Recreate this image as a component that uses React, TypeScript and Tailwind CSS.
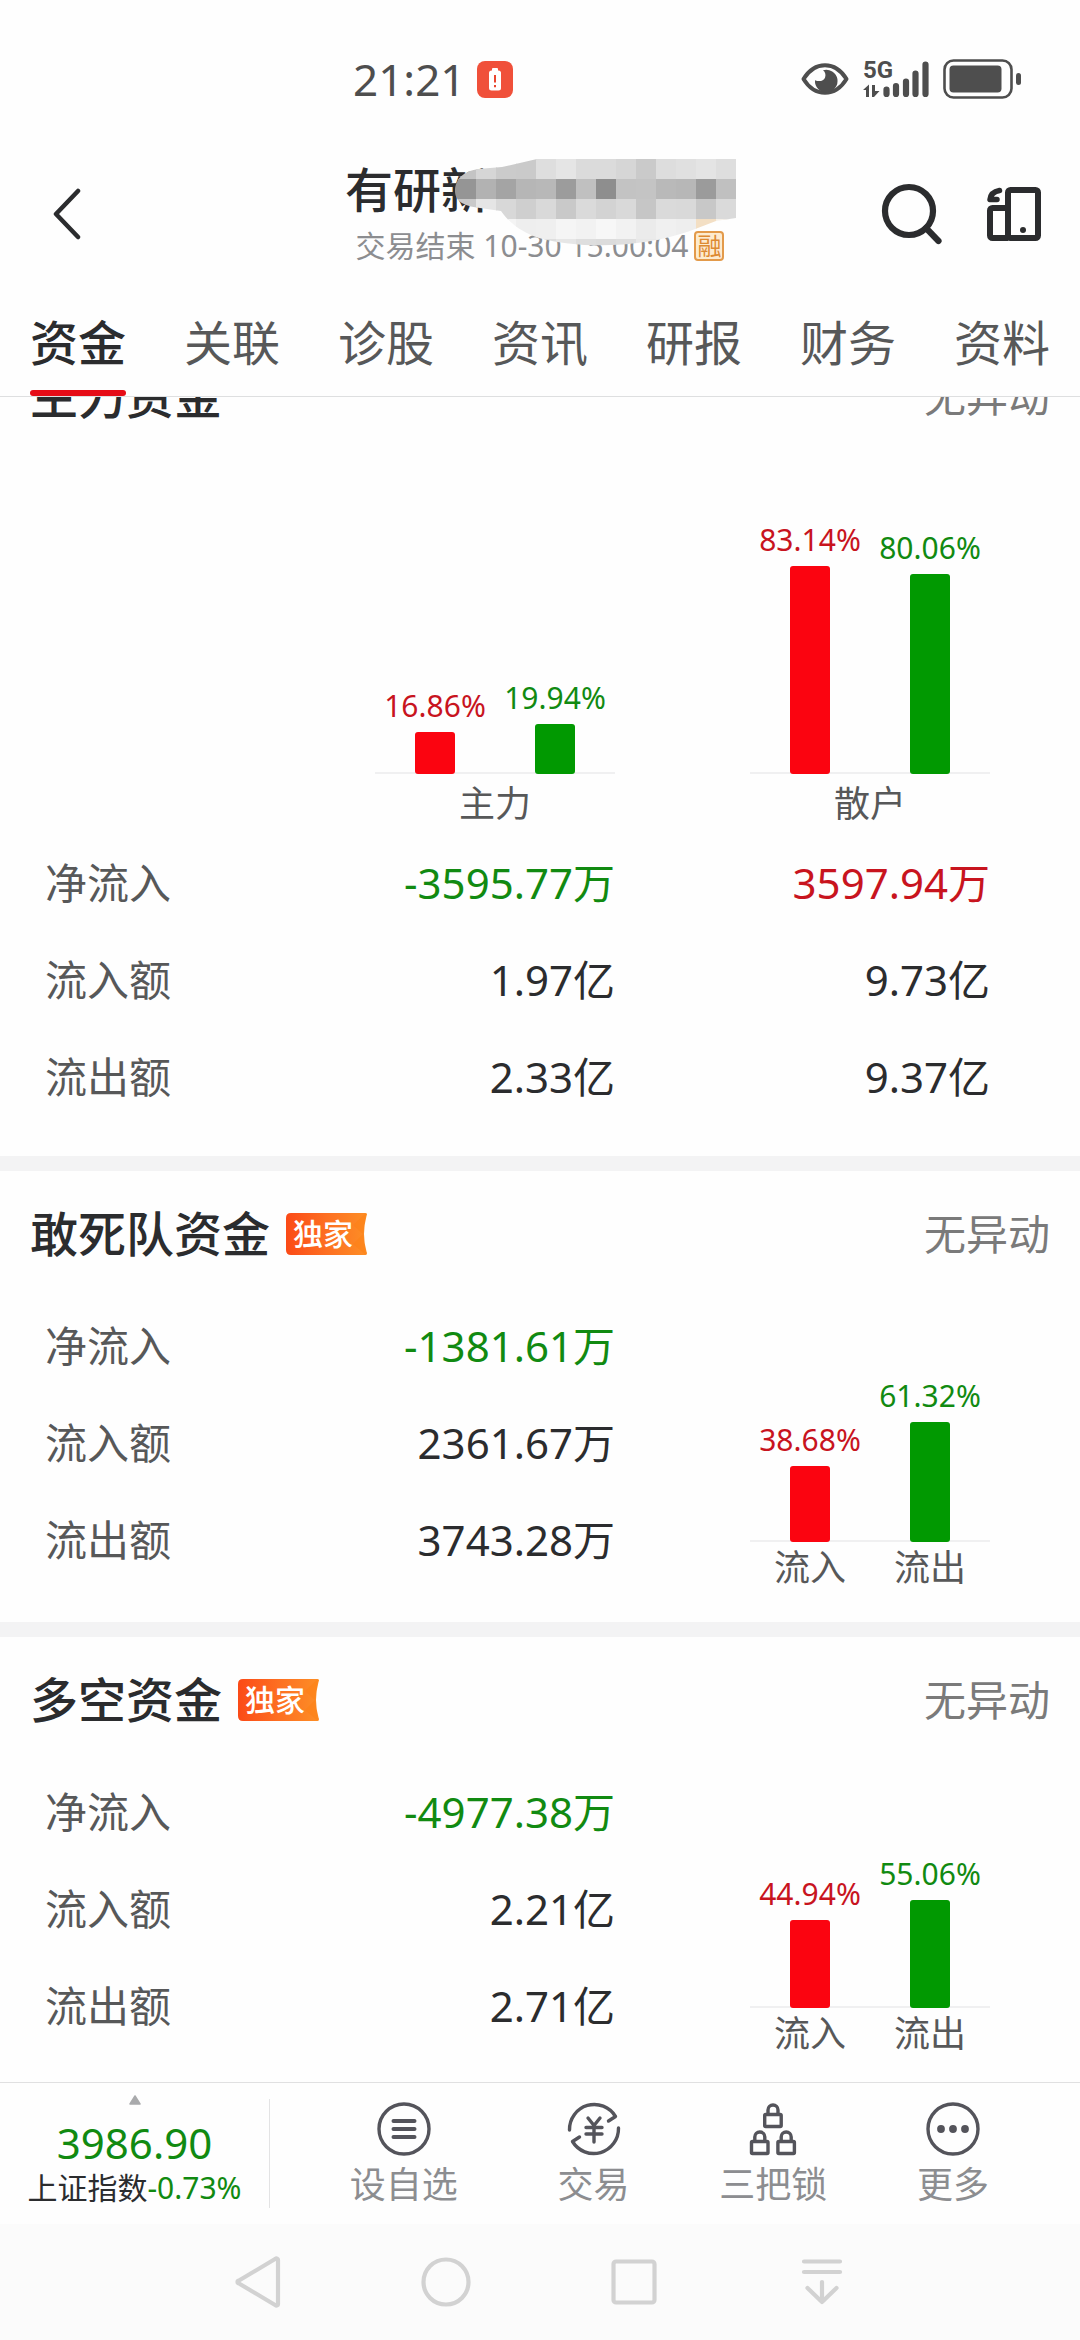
import React from "react";

const FONT = "font-['Noto_Sans','Noto_Sans_CJK_SC',sans-serif]";

type Tone = "red" | "green" | "plain";

const TEXT_TONE: Record<Tone, string> = {
  red: "text-[#c8141e]",
  green: "text-[#118a11]",
  plain: "text-[#2b2c2e]",
};

const BAR_TONE: Record<Tone, string> = {
  red: "bg-[#fb0410]",
  green: "bg-[#019901]",
  plain: "bg-[#2b2c2e]",
};

interface Bar {
  value: number;
  tone: Tone;
  label?: string;
}

interface Row {
  label: string;
  cells: { text: string; tone: Tone }[];
}

function StatusBar() {
  return (
    <div className="flex h-[158px] items-center pl-[353px] pr-[58px] text-[#4e4e4e]">
      <span className="text-[44px] leading-[60px]">21:21</span>
      <svg className="ml-3 h-[37px] w-9" viewBox="0 0 36 37" aria-label="低电量">
        <rect width="36" height="37" rx="8" fill="#f0503a" />
        <rect x="15" y="7" width="6" height="4" rx="1" fill="#fff" />
        <rect x="12" y="9.500" width="12" height="20" rx="2.500" fill="#fff" />
        <path d="M18 14v7.500M18 24v2.200" stroke="#e9452f" strokeWidth="2" />
      </svg>
      <svg className="ml-auto h-8 w-12" viewBox="0 0 48 32" aria-label="护眼模式">
        <path
          d="M2.500 16C8 7 15 2.200 24 2.200S40 7 45.500 16C40 25 33 29.800 24 29.800S8 25 2.500 16Z"
          fill="none"
          stroke="currentColor"
          strokeWidth="4"
          strokeLinejoin="round"
        />
        <path d="M22 7.200a11.300 11.300 0 1 1-8 10c4 1.600 8.500 1 10-2.500 1-3 .5-5.500-2-7.500Z" fill="currentColor" />
      </svg>
      <div className="relative ml-[14px] h-10 w-[67px]">
        <span className="absolute left-0 top-0 font-['Roboto'] text-[24px] leading-[22px] font-bold">5G</span>
        <svg className="h-10 w-[67px]" viewBox="0 0 67 40" aria-label="信号">
          <g stroke="currentColor" strokeLinecap="round" strokeWidth="6.200">
            <path d="M23.500 30.500v4.500M33 27v8M43 22.500V35M52.500 14.500v20.500M62.500 5.500v29.500" />
          </g>
          <path d="M0 31 6 25.500V38H3V31ZM9 26h3v6h4.500L11 38H9Z" fill="currentColor" />
        </svg>
      </div>
      <svg className="ml-[13px] h-10 w-[79px]" viewBox="0 0 79 40" aria-label="电池">
        <rect x="1.500" y="1.500" width="67" height="37" rx="9" fill="none" stroke="currentColor" strokeWidth="2.600" />
        <rect x="6.500" y="6.500" width="52" height="27" rx="4" fill="currentColor" />
        <rect x="73" y="14" width="5" height="12" rx="2.500" fill="currentColor" />
      </svg>
    </div>
  );
}

const MOSAIC: { y: number; h: number; colors: string[] }[] = [
  {
    y: 0,
    h: 21,
    colors: ["#c4c4c4", "#d6d6d6", "#cbcbcb", "#cacaca", "#dedede", "#e5e5e5", "#dbdbdb", "#dbdbdb", "#d6d6d6", "#cacaca", "#dddddd", "#e0e0e0", "#e4e4e4", "#dedede"],
  },
  {
    y: 21,
    h: 20,
    colors: ["#959595", "#b2b2b2", "#a4a4a4", "#b6b6b6", "#b8b8b8", "#9c9c9c", "#c0c0c0", "#8e8e8e", "#c3c3c3", "#c4c4c4", "#b9b9b9", "#b7b7b7", "#9b9b9b", "#c0c0c0"],
  },
  {
    y: 41,
    h: 20,
    colors: ["#c9c9c9", "#e5e5e5", "#d8d8d8", "#cfcfcf", "#d9d9d9", "#c9c9c9", "#dadada", "#d3d3d3", "#d9d9d9", "#c6c6c6", "#dadada", "#d9d9d9", "#c8c8c8", "#dadada"],
  },
  {
    y: 61,
    h: 20,
    colors: ["#ffffff", "#ffffff", "#f4f4f4", "#eeeeee", "#efefef", "#f5f5f5", "#f2f2f2", "#f7f7f7", "#f2f2f2", "#ebebeb", "#f0f0f0", "#eeeeee", "#f3dfc4", "#f6f1ea"],
  },
  {
    y: 81,
    h: 10,
    colors: ["#ffffff", "#ffffff", "#e8e8e8", "#e6e6e6", "#dedede", "#e6e6e6", "#dedede", "#dcdcdc", "#dedede", "#e8e8e8", "#ececec", "#eeeeee", "#eeeeee", "#eeeeee"],
  },
];

function Mosaic() {
  return (
    <svg className="absolute left-[109px] top-0 z-10 h-[90px] w-[290px]" viewBox="0 0 290 90" aria-hidden="true">
      <clipPath id="smear">
        <path d="M1 33C1 24 6 14 24 11L48 9 83 1H282V60L262 63 236 73C190 89 130 92 85 80 70 75 56 66 47 53L26 50C8 48 1 42 1 33Z" />
      </clipPath>
      <g clipPath="url(#smear)">
        {MOSAIC.map((row) =>
          row.colors.map((c, i) => (
            <rect key={`${row.y}-${i}`} x={i * 20 + 2 - (i === 0 ? 2 : 0)} y={row.y} width={i === 0 ? 23 : 21} height={row.h + 1} fill={c} />
          )),
        )}
      </g>
    </svg>
  );
}

function Header() {
  return (
    <header className="flex h-28 items-center justify-between px-[38px]">
      <button aria-label="返回" className="flex h-20 w-[170px] items-center pl-2">
        <svg className="h-[52px] w-10" viewBox="0 0 40 52" fill="none">
          <path d="M32 3 10 26l22 23" stroke="#2b2c2e" strokeWidth="4.500" strokeLinecap="round" strokeLinejoin="round" />
        </svg>
      </button>
      <div className="w-[390px]">
        <h1 className="relative text-[48px] leading-[64px] font-medium text-[#2b2c2e]">
          有研新
          <Mosaic />
        </h1>
        <p className="flex items-center justify-center gap-1.5 text-[30px] leading-[48px] whitespace-nowrap text-[#8c8d90]">
          交易结束 10-30 15:00:04
          <span className="flex h-[30px] w-[30px] items-center justify-center rounded border-2 border-[#e39a4a] bg-[#fdebcf] text-[24px] leading-[26px] text-[#dd8a32]">
            融
          </span>
        </p>
      </div>
      <div className="flex w-[170px] items-center justify-end gap-[43px]">
        <button aria-label="搜索">
          <svg className="h-[62px] w-[62px]" viewBox="0 0 62 62" fill="none" stroke="#2b2c2e" strokeWidth="6.200">
            <circle cx="28" cy="28" r="24" />
            <path d="m45 45 12.500 13" strokeLinecap="round" />
          </svg>
        </button>
        <button aria-label="切换横屏">
          <svg className="h-[56px] w-[56px]" viewBox="0 0 56 56" fill="none" stroke="#2b2c2e" strokeWidth="6">
            <rect x="22" y="4" width="30" height="48" rx="2.500" />
            <path d="M22 22H6.500A2.500 2.500 0 0 0 4 24.500v25A2.500 2.500 0 0 0 6.500 52H22" />
            <circle cx="37" cy="44" r="3" fill="#2b2c2e" stroke="none" />
            <path d="M13.500 4.500C8 5.500 4.500 9 4 13.500h7" strokeWidth="5.500" strokeLinecap="round" strokeLinejoin="round" />
          </svg>
        </button>
      </div>
    </header>
  );
}

const TABS = ["资金", "关联", "诊股", "资讯", "研报", "财务", "资料"];

function Tabs() {
  return (
    <nav className="flex justify-between border-b border-[#dedfe0] px-[30px]">
      {TABS.map((tab, i) => (
        <button key={tab} className="flex flex-col pt-[43px]" aria-current={i === 0 ? "page" : undefined}>
          <span
            className={
              i === 0
                ? "text-[48px] leading-[60px] font-medium text-[#2b2c2e]"
                : "text-[48px] leading-[60px] text-[#575859]"
            }
          >
            {tab}
          </span>
          <span className={i === 0 ? "mt-[17px] h-1.5 w-full rounded-full bg-[#e60c17]" : "mt-[17px] h-1.5 w-full"} />
        </button>
      ))}
    </nav>
  );
}

function ExclusiveBadge() {
  return (
    <span className="relative flex h-[42px] w-[81px] items-center pl-[7px]">
      <svg className="absolute inset-0 h-full w-full" viewBox="0 0 81 42" aria-hidden="true">
        <defs>
          <linearGradient id="badge" x1="0" y1="0" x2="1" y2="0">
            <stop offset="0" stopColor="#fb4a17" />
            <stop offset=".5" stopColor="#fd6f22" />
            <stop offset="1" stopColor="#fd8e25" />
          </linearGradient>
        </defs>
        <path d="M5 0H79q3 0 1.500 3-5 18 0 35.500Q82 42 79 42H5q-5 0-5-5V5q0-5 5-5Z" fill="url(#badge)" />
        <path d="M80 0 67 12 77 21ZM80 42 67 31 77 21Z" fill="#fd8014" opacity=".5" />
      </svg>
      <span className="relative text-[30px] leading-[42px] font-medium text-white">独家</span>
    </span>
  );
}

function SectionTitle({ title, exclusive }: { title: string; exclusive?: boolean }) {
  return (
    <div className="flex h-[126px] items-center justify-between px-[30px]">
      <h2 className="flex items-center gap-4 text-[48px] leading-[60px] font-medium text-[#2b2c2e]">
        {title}
        {exclusive && <ExclusiveBadge />}
      </h2>
      <span className="text-[42px] leading-[60px] text-[#7a7a7a]">无异动</span>
    </div>
  );
}

function BarChart({ bars, scale, caption, areaClass }: { bars: Bar[]; scale: number; caption?: string; areaClass: string }) {
  return (
    <figure className="w-60 justify-self-end">
      <div className={areaClass}>
        {bars.map((bar) => (
          <div key={bar.value} className="-mb-0.5 flex w-1/2 flex-col items-center">
            <span className={`${TEXT_TONE[bar.tone]} text-[30px] leading-[44px]`}>{bar.value.toFixed(2)}%</span>
            <span
              className={`${BAR_TONE[bar.tone]} mt-1 w-10 rounded-[3px]`}
              style={{ height: Math.round((bar.value * scale) / 100) }}
            />
          </div>
        ))}
      </div>
      <figcaption className="flex text-center text-[36px] text-[#575859]">
        {caption ? (
          <span className="flex-1 leading-[60px]">{caption}</span>
        ) : (
          bars.map((bar) => (
            <span key={bar.label} className="flex-1 leading-[51px]">
              {bar.label}
            </span>
          ))
        )}
      </figcaption>
    </figure>
  );
}

function FlowTable({ rows }: { rows: Row[] }) {
  return (
    <table className="w-full table-fixed text-[42px] leading-[60px]">
      <tbody>
        {rows.map((row) => (
          <tr key={row.label} className="h-[97px]">
            <th scope="row" className="w-[195px] p-0 text-left font-normal text-[#575859]">
              {row.label}
            </th>
            {row.cells.map((cell) => (
              <td key={cell.text} className={`${TEXT_TONE[cell.tone]} p-0 text-right`}>
                {cell.text}
              </td>
            ))}
          </tr>
        ))}
      </tbody>
    </table>
  );
}

function Divider() {
  return <div className="h-[15px] bg-[#f3f3f4]" />;
}

function ExclusiveSection({ title, rows, bars }: { title: string; rows: Row[]; bars: Bar[] }) {
  return (
    <section>
      <SectionTitle title={title} exclusive />
      <div className="grid grid-cols-[195px_1fr_1fr] items-start pr-[90px] pb-[29px] pl-[45px]">
        <div className="col-span-2">
          <FlowTable rows={rows} />
        </div>
        <BarChart bars={bars} scale={196} areaClass="flex h-[245px] items-end border-b-2 border-[#f0f0f1]" />
      </div>
    </section>
  );
}

function Content() {
  return (
    <main className="min-h-0 flex-1 overflow-hidden">
      <section className="-mt-16 pb-[31px]">
        <SectionTitle title="主力资金" />
        <div className="pr-[90px] pl-[45px]">
          <div className="grid grid-cols-[195px_1fr_1fr]">
            <span />
            <BarChart
              caption="主力"
              scale={250}
              bars={[
                { value: 16.86, tone: "red" },
                { value: 19.94, tone: "green" },
              ]}
              areaClass="flex h-[315px] items-end border-b-2 border-[#f0f0f1]"
            />
            <BarChart
              caption="散户"
              scale={250}
              bars={[
                { value: 83.14, tone: "red" },
                { value: 80.06, tone: "green" },
              ]}
              areaClass="flex h-[315px] items-end border-b-2 border-[#f0f0f1]"
            />
          </div>
          <FlowTable
            rows={[
              { label: "净流入", cells: [{ text: "-3595.77万", tone: "green" }, { text: "3597.94万", tone: "red" }] },
              { label: "流入额", cells: [{ text: "1.97亿", tone: "plain" }, { text: "9.73亿", tone: "plain" }] },
              { label: "流出额", cells: [{ text: "2.33亿", tone: "plain" }, { text: "9.37亿", tone: "plain" }] },
            ]}
          />
        </div>
      </section>
      <Divider />
      <ExclusiveSection
        title="敢死队资金"
        rows={[
          { label: "净流入", cells: [{ text: "-1381.61万", tone: "green" }] },
          { label: "流入额", cells: [{ text: "2361.67万", tone: "plain" }] },
          { label: "流出额", cells: [{ text: "3743.28万", tone: "plain" }] },
        ]}
        bars={[
          { value: 38.68, tone: "red", label: "流入" },
          { value: 61.32, tone: "green", label: "流出" },
        ]}
      />
      <Divider />
      <ExclusiveSection
        title="多空资金"
        rows={[
          { label: "净流入", cells: [{ text: "-4977.38万", tone: "green" }] },
          { label: "流入额", cells: [{ text: "2.21亿", tone: "plain" }] },
          { label: "流出额", cells: [{ text: "2.71亿", tone: "plain" }] },
        ]}
        bars={[
          { value: 44.94, tone: "red", label: "流入" },
          { value: 55.06, tone: "green", label: "流出" },
        ]}
      />
    </main>
  );
}

function Lock({ x, y }: { x: number; y: number }) {
  return (
    <g transform={`translate(${x} ${y})`}>
      <rect x="1.500" y="12" width="16.500" height="12" rx="1" />
      <path d="M4.800 12V7.500a5 5 0 0 1 10 0V12" />
    </g>
  );
}

const ACTIONS: { label: string; icon: React.ReactNode }[] = [
  {
    label: "设自选",
    icon: (
      <>
        <circle cx="28" cy="28" r="25" />
        <path d="M17.500 20h21M17.500 28h21M17.500 36h21" strokeLinecap="round" strokeWidth="4" />
      </>
    ),
  },
  {
    label: "交易",
    icon: (
      <g strokeLinecap="round" strokeLinejoin="round">
        <path d="M3.500 29A24.800 25 0 0 1 49.500 15.500L42.500 20" />
        <path d="M52.500 27A24.800 25 0 0 1 6.500 40.500L13.500 36" />
        <path d="m22 17 6 7.500 6-7.500M28 25v16M20 26.500h16M20 33h16" />
      </g>
    ),
  },
  {
    label: "三把锁",
    icon: (
      <g strokeLinejoin="round">
        <Lock x={18.2} y={1.5} />
        <Lock x={5} y={28.5} />
        <Lock x={31.4} y={28.5} />
      </g>
    ),
  },
  {
    label: "更多",
    icon: (
      <>
        <circle cx="28" cy="28" r="25" />
        <g fill="currentColor" stroke="none">
          <circle cx="16" cy="28" r="3.900" />
          <circle cx="28" cy="28" r="3.900" />
          <circle cx="40" cy="28" r="3.900" />
        </g>
      </>
    ),
  },
];

function ActionBar() {
  return (
    <footer className="flex h-[142px] border-t border-[#e0e0e1]">
      <button className="flex w-[269px] flex-col items-center pt-3">
        <svg className="h-2.5 w-3" viewBox="0 0 12 10">
          <path d="M6 1 11 9H1Z" fill="#a9aaac" stroke="#a9aaac" strokeWidth="1.500" strokeLinejoin="round" />
        </svg>
        <span className="mt-3 text-[42px] leading-[52px] text-[#118a11]">3986.90</span>
        <span className="text-[30px] leading-[38px] whitespace-nowrap text-[#2b2c2e]">
          上证指数<span className="text-[#118a11]">-0.73%</span>
        </span>
      </button>
      <div className="my-4 grid flex-1 grid-cols-[200fr_180fr_180fr_180fr] border-l border-[#e3e3e4] pr-[37px] pl-[34px]">
        {ACTIONS.map((action) => (
          <button key={action.label} className="flex flex-col items-center gap-1 pt-0.5">
            <svg
              className="h-14 w-14 text-[#54545b]"
              viewBox="0 0 56 56"
              fill="none"
              stroke="currentColor"
              strokeWidth="3.400"
              aria-hidden="true"
            >
              {action.icon}
            </svg>
            <span className="text-[36px] leading-[48px] text-[#8c8d90]">{action.label}</span>
          </button>
        ))}
      </div>
    </footer>
  );
}

const SYSTEM_KEYS: { label: string; icon: React.ReactNode }[] = [
  { label: "返回键", icon: <path d="M48 6v44a1.500 1.500 0 0 1-2.500 1.200L9 29.500a1.500 1.500 0 0 1 0-3L45.500 4.800A1.500 1.500 0 0 1 48 6Z" /> },
  { label: "主屏幕键", icon: <circle cx="28" cy="28" r="22.500" /> },
  { label: "多任务键", icon: <rect x="7.500" y="7.500" width="41" height="41" rx="2.500" /> },
  {
    label: "收起键",
    icon: <path d="M10 7.500h36M10 18h36M28 28v20M13.500 34 28 48l14.500-14" strokeLinecap="round" />,
  },
];

function SystemNav() {
  return (
    <nav className="flex h-[116px] items-center justify-center bg-[#fbfbfb]">
      {SYSTEM_KEYS.map((key) => (
        <button key={key.label} aria-label={key.label} className="flex w-[188px] justify-center">
          <svg className="h-14 w-14" viewBox="0 0 56 56" fill="none" stroke="#d2d2d2" strokeWidth="4.200" strokeLinejoin="round">
            {key.icon}
          </svg>
        </button>
      ))}
    </nav>
  );
}

export default function App() {
  return (
    <div lang="zh-CN" className={`${FONT} flex h-screen flex-col overflow-hidden bg-[#fefefe]`}>
      <StatusBar />
      <Header />
      <Tabs />
      <Content />
      <ActionBar />
      <SystemNav />
    </div>
  );
}
